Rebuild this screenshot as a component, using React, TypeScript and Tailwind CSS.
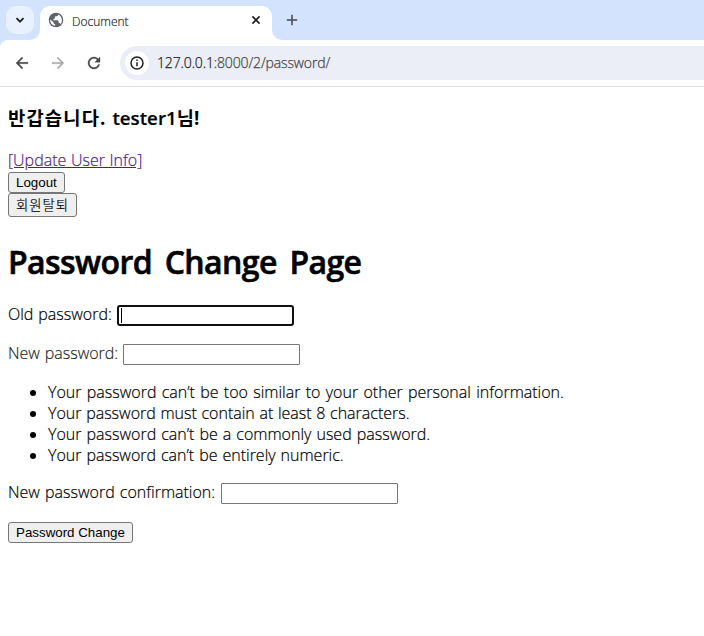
import type { ReactNode } from "react";

const RULES: { text: string; style: string }[] = [
  { text: "Your password can’t be too similar to your other personal information.", style: "[word-spacing:1.15px]" },
  { text: "Your password must contain at least 8 characters.", style: "[word-spacing:0.5px]" },
  { text: "Your password can’t be a commonly used password.", style: "[word-spacing:0.9px]" },
  { text: "Your password can’t be entirely numeric.", style: "[word-spacing:0.8px]" },
];

const BACK = "M20 11H7.83l5.59-5.59L12 4l-8 8 8 8 1.41-1.41L7.83 13H20v-2z";
const RELOAD =
  "M17.65 6.35C16.2 4.9 14.21 4 12 4c-4.42 0-7.99 3.58-7.99 8s3.57 8 7.99 8c3.73 0 6.84-2.55 7.73-6h-2.08c-.82 2.33-3.04 4-5.65 4-3.31 0-6-2.69-6-6s2.69-6 6-6c1.66 0 3.14.69 4.22 1.78L13 11h7V4l-2.35 2.35z";

function TabStrip() {
  return (
    <div className="flex h-10 bg-[#d3e3fd] pt-1.5 pl-1.5">
      <button className="flex size-7 items-center justify-center rounded-[10px] bg-[#e9f1fe]">
        <svg className="size-3" viewBox="0 0 12 12" fill="none" stroke="#1f1f1f" strokeWidth="1.8">
          <path d="M2.5 4.2 6 7.7l3.5-3.5" />
        </svg>
      </button>
      <div className="relative ml-1.5 flex h-[34px] w-[232px] rounded-t-[10px] bg-white pr-[10px] pl-2">
        <svg className="absolute bottom-0 -left-2.5 size-2.5" viewBox="0 0 10 10" fill="#fff">
          <path d="M10 0v10H0A10 10 0 0 0 10 0z" />
        </svg>
        <svg className="absolute -right-2.5 bottom-0 size-2.5" viewBox="0 0 10 10" fill="#fff">
          <path d="M0 0v10h10A10 10 0 0 1 0 0z" />
        </svg>
        <svg className="mt-[6px] size-4" viewBox="1 1 22 22" fill="none">
          <circle cx="12" cy="12" r="10" fill="#5f6368" />
          <path d="M15.2 4.3c-.3 1.8-1.5 2.7-3.2 2.7-1.2 0-1.5.8-1.5 1.8 0 1-.8 1.7-2.1 1.7v1.8h5.2c1.4 0 2 .8 2 2v1.8c1.5 0 2.3.6 2.6 1.7 1.2-1.5 1.9-3.5 1.9-5.5 0-3.6-2-6.7-4.9-8zM4 11.2c-.3 4.6 2.6 8 6.9 8.7v-2c-1.5 0-2.2-.8-2.2-2v-.8z" fill="#fff" />
        </svg>
        <span className="mt-[7px] ml-2 text-[12px] leading-[18px] font-light text-[#1f1f1f] [-webkit-text-stroke:0.2px_#1f1f1f]">Document</span>
        <svg className="mt-2 ml-auto size-3" viewBox="0 0 12 12" fill="none" stroke="#1f1f1f" strokeWidth="1.6">
          <path d="m2.4 2.4 7.2 7.2m0-7.2-7.2 7.2" />
        </svg>
      </div>
      <svg className="mt-2 ml-3.5 size-3" viewBox="0 0 12 12" fill="none" stroke="#474747" strokeWidth="1.5">
        <path d="M6 .8v10.4M.8 6h10.4" />
      </svg>
    </div>
  );
}

function Toolbar() {
  return (
    <div className="bg-[#d3e3fd]">
      <div className="flex h-[47px] items-start rounded-tl-lg border-b border-[#e1e3e1] bg-white pt-1.5 pl-[13px]">
        <svg className="mt-2 size-[18px]" viewBox="0 0 24 24" fill="#474747" stroke="#474747" strokeWidth=".4">
          <path d={BACK} />
        </svg>
        <svg className="mt-2 ml-[18px] size-[18px] -scale-x-100" viewBox="0 0 24 24" fill="#ababab" stroke="#ababab" strokeWidth=".4">
          <path d={BACK} />
        </svg>
        <svg className="mt-2 ml-[18px] size-[18px]" viewBox="0 0 24 24" fill="#474747" stroke="#474747" strokeWidth=".4">
          <path d={RELOAD} />
        </svg>
        <div className="ml-[17px] flex h-[34px] flex-1 items-center rounded-l-full bg-[#ebeef7] pl-[5px]">
          <span className="flex size-6 items-center justify-center rounded-full bg-white">
            <svg className="size-4" viewBox="0 0 16 16" fill="none" stroke="#1f1f1f" strokeWidth="1.5">
              <circle cx="8" cy="8" r="6" />
              <path d="M8 7.2v4M8 4.6v1.5" />
            </svg>
          </span>
          <span className="ml-2 text-[14px] leading-5 font-light tracking-[-0.13px] text-[#474747] [-webkit-text-stroke:0.25px_currentColor]">
            <span className="text-[#1f1f1f]">127.0.0.1</span>:8000/2/password/
          </span>
        </div>
      </div>
    </div>
  );
}

function PushButton({ children, className }: { children: ReactNode; className: string }) {
  return (
    <button
      className={
        "flex items-center rounded-[3px] border border-[#767676] bg-[#efefef] px-[7px] font-['Liberation_Sans','Noto_Sans_CJK_KR',sans-serif] text-[13.333px] leading-none whitespace-nowrap text-black " +
        className
      }
    >
      {children}
    </button>
  );
}

export default function App() {
  return (
    <div className="h-[636px] w-[704px] overflow-hidden bg-white font-['Open_Sans','Noto_Sans_CJK_KR',sans-serif] text-black">
      <TabStrip />
      <Toolbar />
      <main className="px-2 text-[16px] leading-[21px]">
        <h3 className="mt-[18px] h-[25px] text-[18.72px] leading-[25px] font-semibold whitespace-nowrap [-webkit-text-stroke:0.2px_#000]">
          <span className="font-bold tracking-[1.2px] [-webkit-text-stroke:0px]">반갑습니다.</span>{" "}
          <span className="ml-px">tester1</span>
          <span className="font-bold [-webkit-text-stroke:0px]">님!</span>
        </h3>
        <a className="mt-5 block h-[21px] w-fit font-light whitespace-nowrap text-[#551a8b] underline [word-spacing:0.5px] [-webkit-text-stroke:0.2px_#551a8b]">
          [Update User Info]
        </a>
        <PushButton className="mt-px h-[21px] w-[57px]">Logout</PushButton>
        <PushButton className="h-6 w-[69px] pt-0.5 font-light tracking-[1px] [-webkit-text-stroke:0.2px_#000]">회원탈퇴</PushButton>
        <h1 className="mt-[23px] h-[43px] text-[32px] leading-[43px] font-semibold tracking-[-0.6px] whitespace-nowrap [word-spacing:5px] [-webkit-text-stroke:0.6px_#000]">
          Password Change Page
        </h1>
        <form className="font-light [-webkit-text-stroke:0.2px_#000]">
          <div className="mt-[22px] flex h-[21px]">
            <label className="-mt-px w-[109px] whitespace-nowrap [word-spacing:0.8px]">Old password:</label>
            <span className="flex h-[21px] w-[177px] items-center rounded-[3px] border-2 border-[#101010] pl-0.5">
              <span className="h-[15px] w-px bg-black" />
            </span>
          </div>
          <div className="mt-[18px] flex h-[21px]">
            <label className="-mt-px w-[115px] whitespace-nowrap text-[#202020] [word-spacing:0.7px] [-webkit-text-stroke:0.15px_#202020]">New password:</label>
            <span className="h-[21px] w-[177px] rounded-[1px] border border-[#767676]" />
          </div>
          <ul className="mt-[17px] list-disc pl-10">
            {RULES.map((r) => (
              <li key={r.text} className="h-[21px] whitespace-nowrap">
                <span className={r.style}>{r.text}</span>
              </li>
            ))}
          </ul>
          <div className="mt-[17px] flex h-[21px]">
            <label className="-mt-px w-[213px] whitespace-nowrap [word-spacing:1px]">New password confirmation:</label>
            <span className="h-[21px] w-[177px] rounded-[1px] border border-[#767676]" />
          </div>
          <PushButton className="mt-[18px] h-[21px] w-[125px] font-normal [-webkit-text-stroke:0px]">Password Change</PushButton>
        </form>
      </main>
    </div>
  );
}
